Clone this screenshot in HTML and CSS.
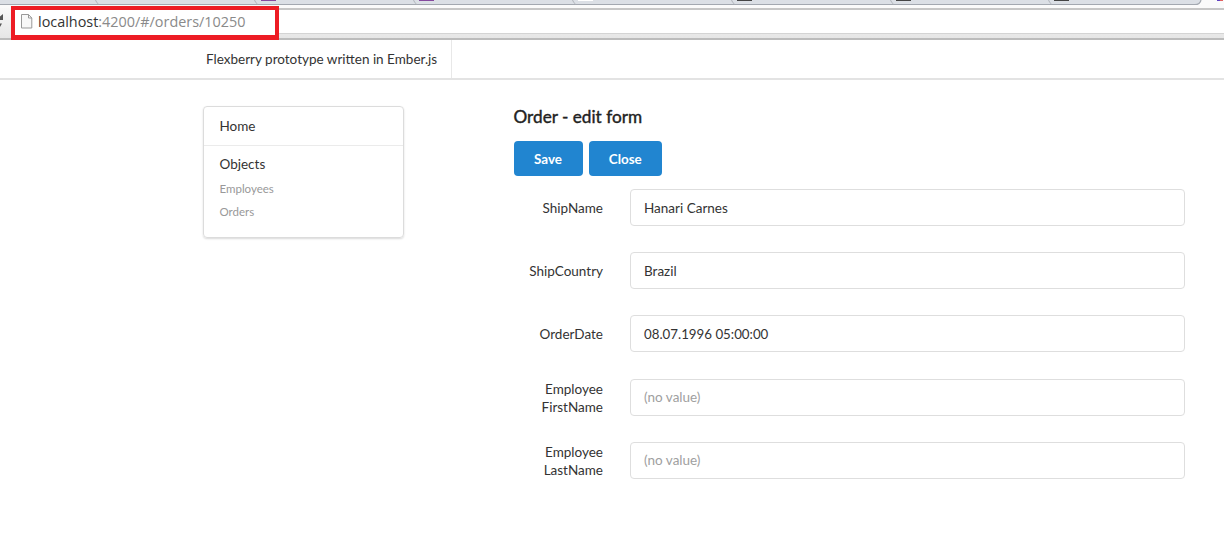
FILE: index.html
```
<!DOCTYPE html>
<html lang="en">
<head>
<meta charset="utf-8">
<title>Order - edit form</title>
<link rel="stylesheet" href="styles.css">
</head>
<body>
<div class="browser">
  <svg class="tabs" width="1224" height="8" viewBox="0 0 1224 8">
    <path d="M0 0H1201Q1200 4.5 1195 4.5H0Z" fill="#dbdfe5"/>
    <path d="M1201 0Q1200 4.5 1195 4.5H0" fill="none" stroke="#a3a8b0" stroke-width="1.2"/>
    <path d="M95.500 0q1 3 3 4M254.500 0q1 3 3 4M413.500 0q1 3 3 4M572.500 0q1 3 3 4M731.500 0q1 3 3 4M890.500 0q1 3 3 4M1048.500 0q1 3 3 4" fill="none" stroke="#b0b4bb"/>
    <path d="M261 0h15v1h-15zM419 0h15v1h-15z" fill="#84499d"/>
    <path d="M578 0h15v1h-15z" fill="#fff"/>
    <path d="M737 0h15v1h-15zM896 0h15v1h-15zM1054 0h15v1h-15z" fill="#444"/>
    <path d="M1217 0h3v1h-3z" fill="#6040c0"/><path d="M1220 0h3v1h-3z" fill="#e06060"/>
  </svg>
  <div class="toolbar">
    <svg class="reload" width="11" height="31" viewBox="0 0 11 31">
      <path d="M0 8.500L3 6V12H0ZM0 15.500H2L0 19Z" fill="#555"/>
    </svg>
    <div class="address"></div>
  </div>
  <div class="highlight">
    <svg class="page-icon" width="12" height="15" viewBox="0 0 12 15">
      <path d="M.5 .5H7.500L10.800 4V14H.5ZM7.500 .5V4H10.800" fill="#f8f8f8" stroke="#999"/>
    </svg>
    <span class="url"><b>localhost</b>:4200/#/orders/10250</span>
  </div>
</div>
<header class="header"><a class="brand">Flexberry prototype written in Ember.js</a></header>
<div class="content">
  <nav class="menu">
    <a class="home">Home</a>
    <div class="group">
      <div class="title">Objects</div>
      <a class="sub">Employees</a>
      <a class="sub">Orders</a>
    </div>
  </nav>
  <main class="form">
    <h3>Order - edit form</h3>
    <div class="buttons"><button class="save">Save</button><button class="close">Close</button></div>
    <div class="field"><label>ShipName</label><div class="input">Hanari Carnes</div></div>
    <div class="field"><label>ShipCountry</label><div class="input">Brazil</div></div>
    <div class="field"><label>OrderDate</label><div class="input date">08.07.1996 05:00:00</div></div>
    <div class="field"><label>Employee<br>FirstName</label><div class="input">
      <span class="empty">(no value)</span></div></div>
    <div class="field"><label>Employee<br>LastName</label><div class="input">
      <span class="empty">(no value)</span></div></div>
  </main>
</div>
</body>
</html>
```
FILE: styles.css
```
* { box-sizing: border-box; }
body { margin: 0; background: #fff; color: #333; font: 13.5px/18px Lato, sans-serif; overflow: hidden; height: 554px; }
.browser { position: relative; height: 40px; background: #fafafa; }
.tabs { display: block; }
.toolbar { display: flex; height: 32px; background: linear-gradient(#f8f8f8, #e6e6e6); border-bottom: 2px solid #bcbcbc; }
.reload { flex: none; }
.address { flex: 1; height: 26px; background: #fff; border-top: 2px solid #c6c6c6; border-bottom: 1px solid #d4d4d4; }
.highlight { position: absolute; left: 11px; top: 6px; width: 268px; height: 34px; border: 4px solid #ed1c24; border-bottom-width: 5px; background: #fff; display: flex; align-items: center; padding: 0 0 2px 6px; }
.page-icon { flex: none; margin-right: 5px; }
.url { font: 14.4px/20px "Open Sans", sans-serif; color: #8a8a8a; white-space: nowrap; }
.url b { font-weight: 400; color: #333; }
.header { height: 40px; padding-left: 190px; border-bottom: 2px solid #e3e3e3; display: flex; }
.brand { display: flex; align-items: center; width: 262px; padding-left: 16px; border-right: 1px solid #e8e8e8; white-space: nowrap; }
.content { display: flex; padding: 26px 39px 0 203px; }
.menu { flex: none; width: 201px; height: 132px; border: 1px solid #dcdcdc; border-radius: 4px; box-shadow: 0 1px 2px rgba(0,0,0,.15); margin-right: 109px; }
.home { display: block; height: 39px; padding: 10px 15.500px; border-bottom: 1px solid #ebebeb; }
.group { padding: 9px 15.500px; }
.title { margin-bottom: 4px; }
.sub { display: block; height: 23px; line-height: 23px; font-size: 11.5px; color: #999; }
.form { flex: 1; padding-left: 1px; }
h3 { margin: 0 0 13px -0.500px; font-size: 17.200px; line-height: 22px; font-weight: 400; -webkit-text-stroke: .4px #222; color: #222; }
.buttons { display: flex; gap: 6px; margin: 0 0 13px -0.500px; }
.buttons button { height: 35px; padding: 0; border: 0; border-radius: 4px; background: #2185d0; color: #fff; font: 700 13.400px Lato, sans-serif; }
.save { width: 69px; }
.close { width: 73.500px; }
.field { display: flex; align-items: center; height: 37px; margin-bottom: 26.200px; }
.field label { width: 89px; margin-right: 27px; padding-top: 1px; text-align: right; white-space: nowrap; }
.input { flex: 1; height: 37px; padding: 0 13px; border: 1px solid #dedede; border-radius: 4px; line-height: 36px; }
.date { font-size: 13.300px; }
.empty { color: #a0a0a0; display: block; line-height: 35px; }
```
